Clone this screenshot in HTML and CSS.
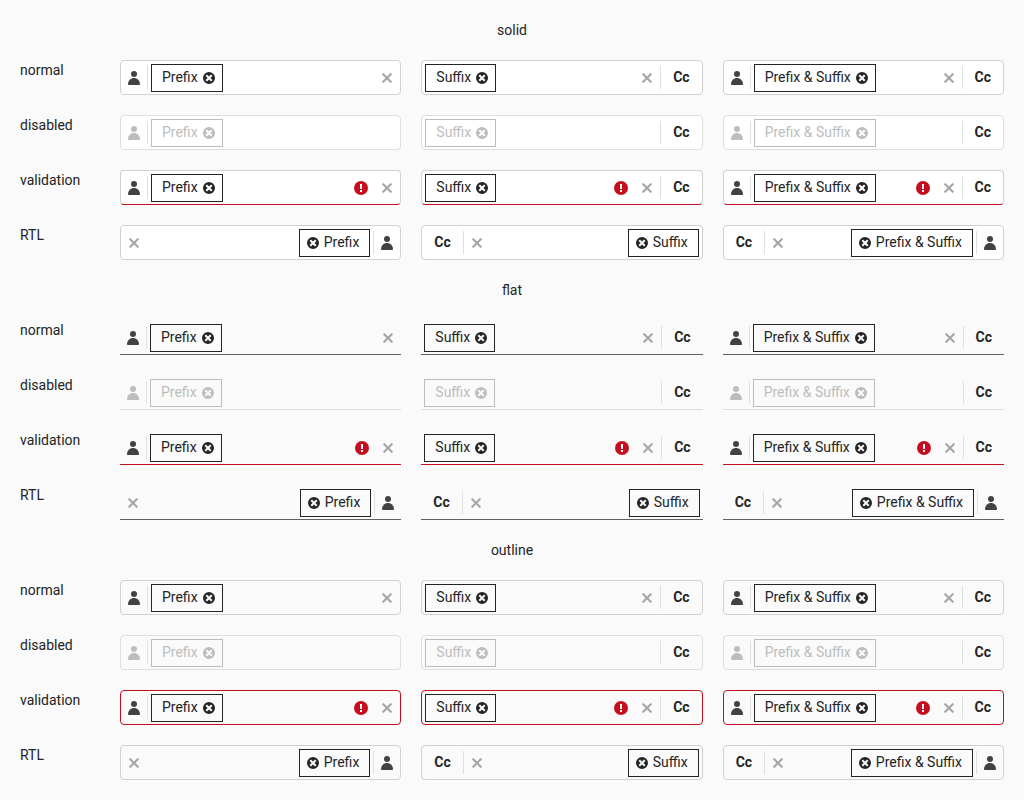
FILE: index.html
```
<!DOCTYPE html>
<html lang="en">
<head>
<meta charset="utf-8">
<meta name="viewport" content="width=device-width, initial-scale=1">
<title>MultiSelect adornments</title>
<link rel="stylesheet" href="styles.css">
</head>
<body>
<svg class="sprite" aria-hidden="true">
  <symbol id="person" viewBox="0 0 12 14">
    <circle cx="6" cy="3" r="3"/>
    <path d="M0 13.2C0 9.6 2.7 7 6 7s6 2.6 6 6.2c0 .5-.3.8-.8.8H.8c-.5 0-.8-.3-.8-.8z"/>
  </symbol>
  <symbol id="remove" viewBox="0 0 12 12">
    <path fill-rule="evenodd" d="M6 0a6 6 0 1 1 0 12A6 6 0 0 1 6 0zM4 2.5 2.5 4 4.6 6 2.5 8 4 9.5 6 7.4l2 2.1L9.500 8 7.400 6l2.100-2L8 2.500 6 4.600z"/>
  </symbol>
  <symbol id="clear" viewBox="0 0 10 10">
    <path d="M.6.6l8.800 8.800M9.400.6L.6 9.400" fill="none" stroke="currentColor" stroke-width="2.100"/>
  </symbol>
  <symbol id="error" viewBox="0 0 14 14">
    <circle cx="7" cy="7" r="7"/>
    <path d="M6 3h2v5H6zM6 9h2v2H6z" fill="#fff"/>
  </symbol>
</svg>
<main class="grid" id="grid"></main>
<script src="main.js"></script>
</body>
</html>
```
FILE: styles.css
```
* {
  box-sizing: border-box;
}

body {
  margin: 0;
  padding: 20px;
  background: #fafafa;
  color: #242424;
  font: 14px/20px Roboto, "Liberation Sans", sans-serif;
}

.sprite {
  position: absolute;
  width: 0;
  height: 0;
}

.grid {
  display: grid;
  grid-template-columns: 80px repeat(3, minmax(0, 1fr));
  gap: 20px;
}

.title {
  grid-column: 1 / -1;
  margin: 0;
  font-size: 14px;
  font-weight: 400;
  text-align: center;
}

.field {
  display: flex;
  align-items: center;
  min-height: 35px;
  border: 1px solid #d1d1d1;
  border-radius: 4px;
}

.field.solid {
  background: #fff;
}

.field.disabled {
  border-color: #dedede;
}

.field.flat {
  border-width: 1px 0;
  border-color: transparent transparent #616161;
  border-radius: 0;
}

.field.flat.disabled {
  border-bottom-color: #dedede;
}

.field.validation {
  border-bottom-color: #c50f1f;
}

.field.outline.validation {
  border-color: #c50f1f;
}

.icon {
  display: block;
  flex: none;
  fill: currentColor;
}

.person {
  width: 12px;
  height: 14px;
}

.remove {
  width: 12px;
  height: 12px;
}

.clear {
  width: 10px;
  height: 10px;
}

.error {
  width: 14px;
  height: 14px;
}

.slot {
  display: flex;
  flex: none;
  justify-content: center;
  width: 26px;
  color: #424242;
}

.disabled .slot {
  color: #bdbdbd;
}

.slot.alert {
  color: #c50f1f;
}

.separator {
  flex: none;
  width: 1px;
  height: 23px;
  background: #e0e0e0;
}

.tag {
  display: flex;
  flex: none;
  align-items: center;
  gap: 5px;
  height: 28px;
  margin-inline: 3px;
  margin-top: 1px;
  padding-inline: 10px 7px;
  border: 1px solid #242424;
}

.tag-text,
.suffix {
  padding-bottom: 2px;
}

.disabled .tag {
  border-color: #bdbdbd;
  color: #bdbdbd;
}

button {
  padding: 0;
  border: 0;
  background: none;
  color: inherit;
  font: inherit;
}

button.slot {
  padding: 8px 0;
  color: #a6a6a6;
}

.input {
  flex: 1;
  min-width: 0;
  width: 0;
  padding: 0;
  border: 0;
  outline: 0;
  background: transparent;
  color: inherit;
  font: inherit;
}

.suffix {
  flex: none;
  padding-inline: 12px;
  font-weight: 700;
}
```
FILE: main.js
```
const appearances = ["solid", "flat", "outline"];
const states = ["normal", "disabled", "validation", "RTL"];
const kinds = [
  { text: "Prefix", prefix: true },
  { text: "Suffix", suffix: true },
  { text: "Prefix &amp; Suffix", prefix: true, suffix: true }
];

const icon = (name) =>
  `<svg class="icon ${name}" aria-hidden="true"><use href="#${name}"/></svg>`;
const separator = '<span class="separator"></span>';

function field(appearance, state, kind) {
  const off = state === "disabled" ? " disabled" : "";
  const dir = state === "RTL" ? "rtl" : "ltr";
  return `<div class="field ${appearance} ${state}" dir="${dir}">
    ${kind.prefix ? `<span class="slot">${icon("person")}</span>${separator}` : ""}
    <span class="tag"><span class="tag-text">${kind.text}</span><button type="button" aria-label="Remove ${kind.text}"${off}>${icon("remove")}</button></span>
    <input class="input" type="text" aria-label="${appearance} ${state} ${kind.text}"${off}>
    ${state === "validation" ? `<span class="slot alert">${icon("error")}</span>` : ""}
    ${off ? "" : `<button class="slot" type="button" aria-label="Clear">${icon("clear")}</button>`}
    ${kind.suffix ? `${separator}<span class="suffix">Cc</span>` : ""}
  </div>`;
}

document.getElementById("grid").innerHTML = appearances.map((appearance) =>
  `<h2 class="title">${appearance}</h2>` + states.map((state) =>
    `<span class="label">${state}</span>` +
    kinds.map((kind) => field(appearance, state, kind)).join("")
  ).join("")
).join("");
```
